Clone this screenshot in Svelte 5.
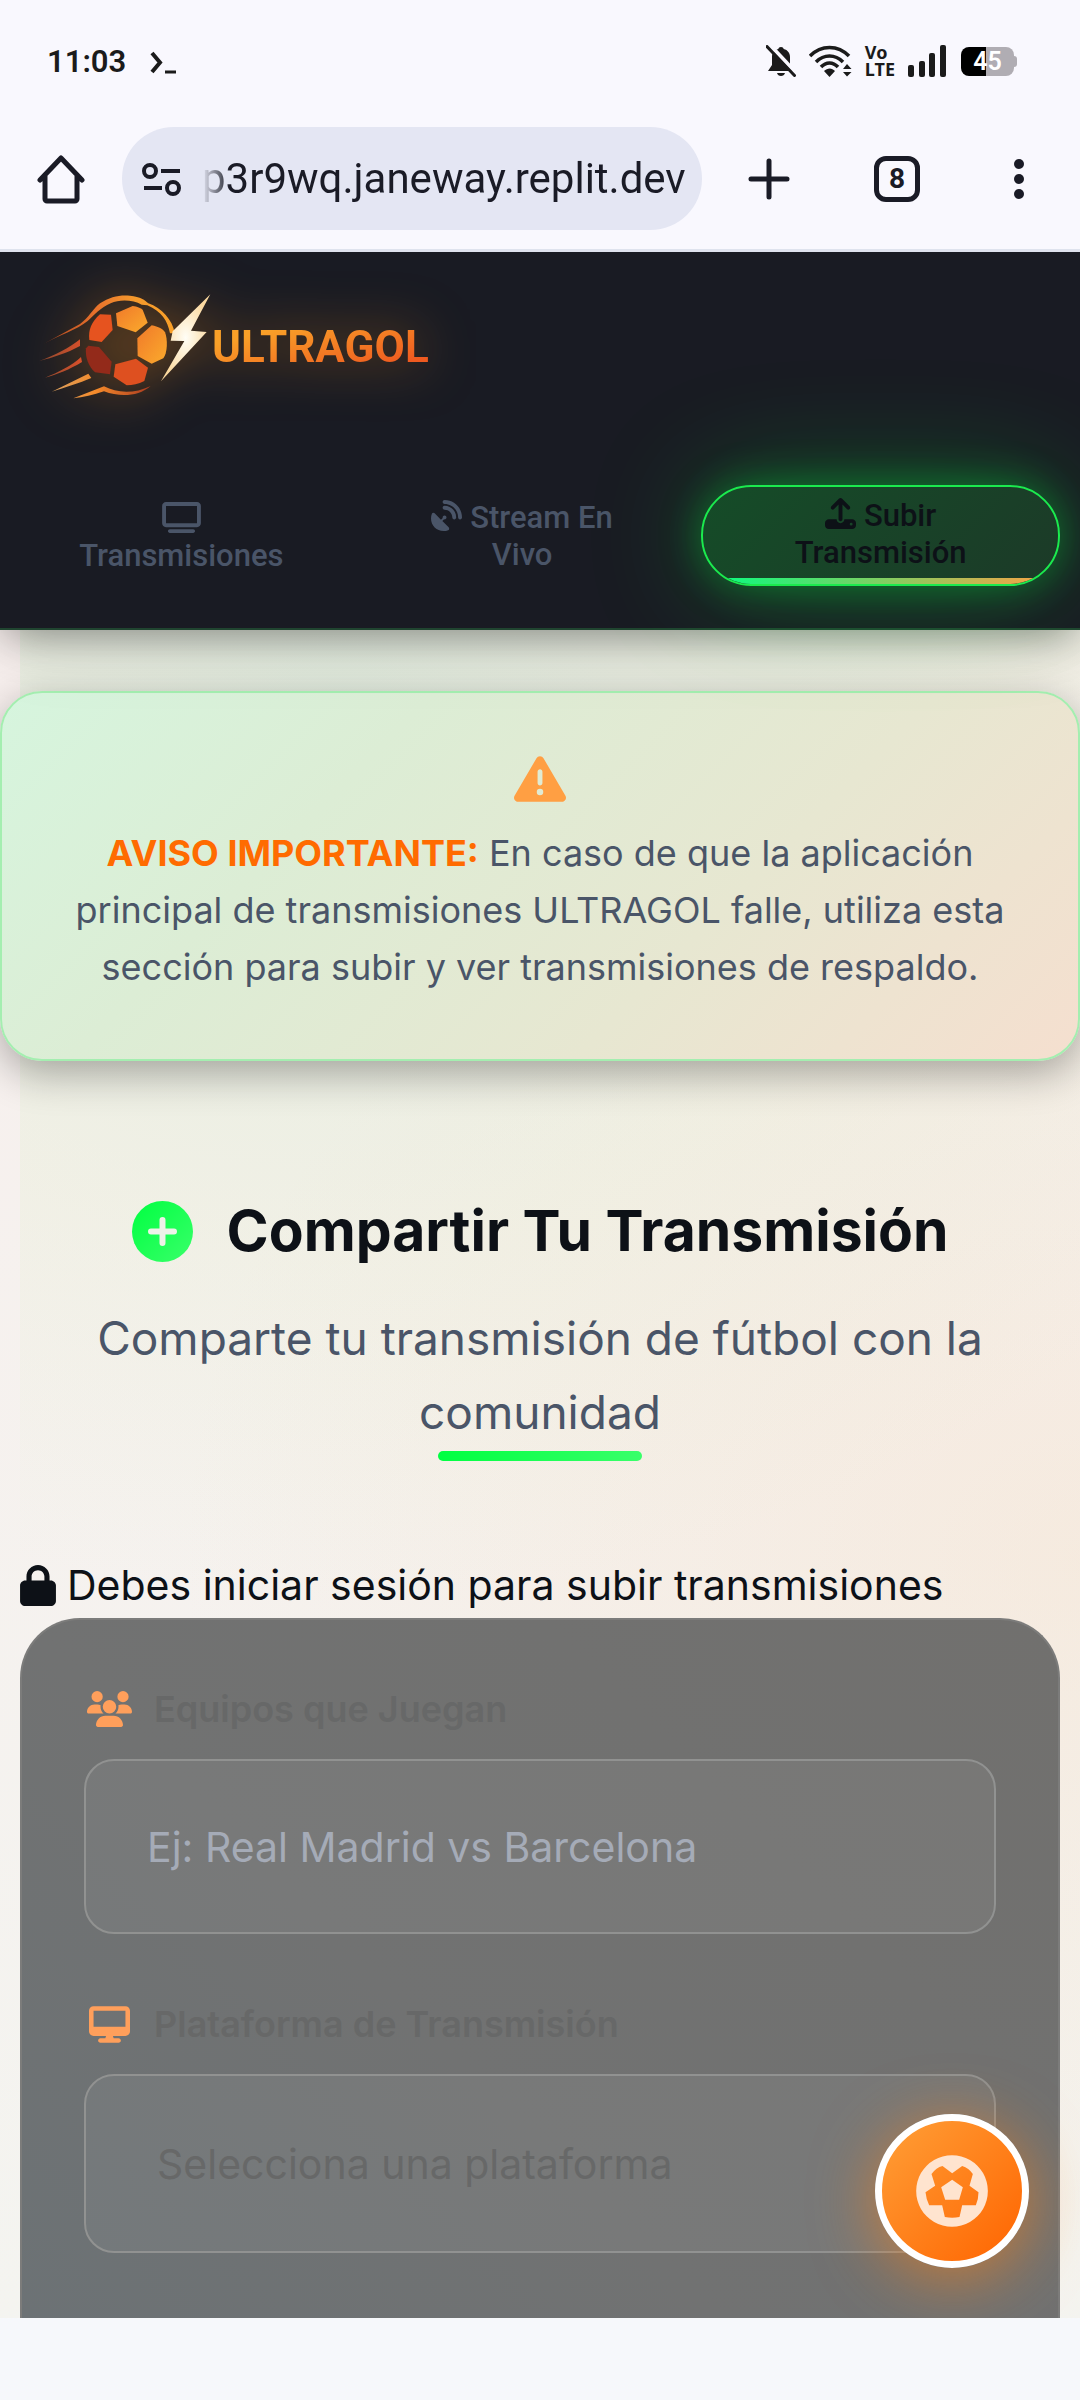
<script>
  const icons = {
    tv: {
      box: '0 0 640 512',
      d: 'M64 64V352H576V64H64zM0 64C0 28.7 28.7 0 64 0H576c35.3 0 64 28.7 64 64V352c0 35.3-28.7 64-64 64H64c-35.3 0-64-28.7-64-64V64zM128 448H512c17.7 0 32 14.3 32 32s-14.3 32-32 32H128c-17.7 0-32-14.3-32-32s14.3-32 32-32z'
    },
    dish: {
      box: '0 0 512 512',
      d: 'M192 32c0-17.7 14.3-32 32-32C383.1 0 512 128.9 512 288c0 17.7-14.3 32-32 32s-32-14.3-32-32C448 164.3 347.7 64 224 64c-17.7 0-32-14.3-32-32zM60.6 220.6L164.7 324.7l28.4-28.4c-.7-2.6-1.1-5.4-1.1-8.3c0-17.7 14.3-32 32-32s32 14.3 32 32s-14.3 32-32 32c-2.9 0-5.6-.4-8.3-1.1l-28.4 28.4L291.4 451.4c14.5 14.5 11.8 38.8-7.3 46.3C260.5 506.9 234.9 512 208 512C93.1 512 0 418.9 0 304c0-26.9 5.1-52.5 14.4-76.1c7.5-19 31.8-21.8 46.3-7.3zM224 96c106 0 192 86 192 192c0 17.7-14.3 32-32 32s-32-14.3-32-32c0-70.7-57.3-128-128-128c-17.7 0-32-14.3-32-32s14.3-32 32-32z'
    },
    upload: {
      box: '0 0 512 512',
      d: 'M288 109.3V352c0 17.7-14.3 32-32 32s-32-14.3-32-32V109.3l-73.4 73.4c-12.5 12.5-32.8 12.5-45.3 0s-12.5-32.8 0-45.3l128-128c12.5-12.5 32.8-12.5 45.3 0l128 128c12.5 12.5 12.5 32.8 0 45.3s-32.8 12.5-45.3 0L288 109.3zM64 352H192c0 35.3 28.7 64 64 64s64-28.7 64-64H448c35.3 0 64 28.7 64 64v32c0 35.3-28.7 64-64 64H64c-35.3 0-64-28.7-64-64V416c0-35.3 28.7-64 64-64zM432 456a24 24 0 1 0 0-48 24 24 0 1 0 0 48z'
    },
    warning: {
      box: '0 0 512 512',
      d: 'M256 32c14.2 0 27.3 7.5 34.5 19.8l216 368c7.3 12.4 7.3 27.7 .2 40.1S486.3 480 472 480H40c-14.3 0-27.6-7.7-34.7-20.1s-7-27.8 .2-40.1l216-368C228.7 39.5 241.8 32 256 32zm0 128c-13.3 0-24 10.7-24 24V296c0 13.3 10.7 24 24 24s24-10.7 24-24V184c0-13.3-10.7-24-24-24zm32 224a32 32 0 1 0 -64 0 32 32 0 1 0 64 0z'
    },
    lock: {
      box: '0 0 448 512',
      d: 'M144 144v48H304V144c0-44.2-35.8-80-80-80s-80 35.8-80 80zM80 192V144C80 64.5 144.5 0 224 0s144 64.5 144 144v48h16c35.3 0 64 28.7 64 64V448c0 35.3-28.7 64-64 64H64c-35.3 0-64-28.7-64-64V256c0-35.3 28.7-64 64-64H80z'
    },
    users: {
      box: '0 0 640 512',
      d: 'M144 0a80 80 0 1 1 0 160A80 80 0 1 1 144 0zM512 0a80 80 0 1 1 0 160A80 80 0 1 1 512 0zM0 298.7C0 239.8 47.8 192 106.7 192h42.7c15.9 0 31 3.5 44.6 9.7c-1.3 7.2-1.9 14.7-1.9 22.3c0 38.2 16.8 72.5 43.3 96H21.3C9.6 320 0 310.4 0 298.7zM405.3 320h-.7c26.6-23.5 43.3-57.8 43.3-96c0-7.6-.7-15-1.9-22.3c13.6-6.3 28.7-9.7 44.6-9.7h42.7C592.2 192 640 239.8 640 298.7c0 11.8-9.6 21.3-21.3 21.3H405.3zM224 224a96 96 0 1 1 192 0 96 96 0 1 1 -192 0zM128 485.3C128 411.7 187.7 352 261.3 352H378.7C452.3 352 512 411.7 512 485.3c0 14.7-11.9 26.7-26.7 26.7H154.7c-14.7 0-26.7-11.9-26.7-26.7z'
    },
    desktop: {
      box: '0 0 576 512',
      d: 'M64 0C28.7 0 0 28.7 0 64V352c0 35.3 28.7 64 64 64H240l-10.7 32H160c-17.7 0-32 14.3-32 32s14.3 32 32 32H416c17.7 0 32-14.3 32-32s-14.3-32-32-32H346.7L336 416H512c35.3 0 64-28.7 64-64V64c0-35.3-28.7-64-64-64H64zM512 64V288H64V64H512z'
    }
  };
</script>

{#snippet icon(name, cls)}
  <svg class={cls} viewBox={icons[name].box} fill="currentColor" aria-hidden="true"><path d={icons[name].d} /></svg>
{/snippet}

<div class="screen">
  <div class="status">
    <span class="time">11:03</span>
    <svg class="prompt" viewBox="0 0 28 24" fill="none" stroke="#1b1b1b"><path d="M2 2l8 9.500L2 21" stroke-width="4" /><path d="M15 21h11" stroke-width="3" /></svg>
    <div class="status-icons">
      <svg width="30" height="32" viewBox="0 0 30 32">
        <path fill="#1b1b1b" d="M15 2c1.500 0 2.500.8 2.700 2 4 1 6.300 4 6.300 8v8l4 6H2l4-6v-8c0-4 2.300-7 6.300-8 .2-1.200 1.200-2 2.700-2zM11 28h8c-.5 2-2 3-4 3s-3.500-1-4-3z" />
        <path d="M3 -1L31 29" stroke="#f9f8fe" stroke-width="4" /><path d="M1 1.500L28.500 30.500" stroke="#1b1b1b" stroke-width="3" stroke-linecap="round" />
      </svg>
      <svg width="43" height="32" viewBox="0 0 43 32" fill="none" stroke="#1b1b1b" stroke-width="3.500">
        <path d="M1 11C12-.5 29-.5 40 11M7 17c8-8 19-8 27 0M12 22c5-5.500 12-5.500 17 0" />
        <path fill="#1b1b1b" stroke="none" d="M15 26c3.500-3.500 8-3.500 11 0l-5.500 6zM34 24l4-5 4.500 5zM34 27h8.500L38 31.500z" />
      </svg>
      <span class="volte"><span>Vo</span><span>LTE</span></span>
      <svg width="40" height="32" viewBox="0 0 40 32" fill="#1b1b1b"><rect x="0" y="20" width="6" height="12" rx="2" /><rect x="11" y="16" width="6" height="16" rx="2" /><rect x="21" y="8" width="6" height="24" rx="2" /><rect x="32" y="0" width="6" height="32" rx="2" /></svg>
      <span class="battery">45</span>
    </div>
  </div>

  <div class="toolbar">
    <button class="tool" aria-label="Inicio">
      <svg width="48" height="50" viewBox="0 0 48 50" fill="none" stroke="#1a1b26" stroke-width="5" stroke-linecap="round" stroke-linejoin="round"><path d="M3 26L24 4l21 22M8 21v24c0 1 1 2 2 2h28c1 0 2-1 2-2V21" /></svg>
    </button>
    <div class="url">
      <svg width="40" height="34" viewBox="0 0 40 34" fill="none" stroke="#1a1b26" stroke-width="4"><circle cx="8" cy="9" r="6" /><circle cx="31" cy="26" r="6" /><path d="M19 9h19M2 26h18" /></svg>
      <span class="address">p3r9wq.janeway.replit.dev</span>
    </div>
    <button class="tool" aria-label="Nueva pestaña">
      <svg width="42" height="42" viewBox="0 0 42 42" stroke="#1a1b26" stroke-width="5" stroke-linecap="round"><path d="M21 3v36M3 21h36" /></svg>
    </button>
    <button class="tool" aria-label="Pestañas"><span class="tabs">8</span></button>
    <button class="tool" aria-label="Menú">
      <svg width="12" height="42" viewBox="0 0 12 42" fill="#1a1b26"><circle cx="6" cy="6" r="5" /><circle cx="6" cy="21" r="5" /><circle cx="6" cy="36" r="5" /></svg>
    </button>
  </div>

  <header class="site-header">
    <a class="logo" href="#inicio">
      <svg width="190" height="130" viewBox="0 0 570 390" aria-hidden="true">
        <defs>
          <linearGradient id="arc" x1="0" x2="1"><stop offset="0" stop-color="#a8431f" /><stop offset=".4" stop-color="#e8722c" /><stop offset=".7" stop-color="#f59a2c" /><stop offset="1" stop-color="#f9a028" /></linearGradient>
          <linearGradient id="streak" x1="0" x2="1"><stop offset="0" stop-color="#8a4a30" /><stop offset="1" stop-color="#d9502a" /></linearGradient>
          <linearGradient id="tail" x1="0" x2="1"><stop offset="0" stop-color="#d9a060" /><stop offset=".45" stop-color="#f58a2a" /><stop offset="1" stop-color="#a83a20" /></linearGradient>
          <linearGradient id="gold" x1="0" x2="1" y2="1"><stop offset="0" stop-color="#f0792a" /><stop offset="1" stop-color="#fbab2c" /></linearGradient>
          <radialGradient id="bolt"><stop offset="0" stop-color="#fffef6" /><stop offset="1" stop-color="#fbd9a0" /></radialGradient>
        </defs>
        <path fill="url(#arc)" d="M40 192L150 132C175 115 190 85 210 70C240 50 270 44 300 47C332 50 345 60 355 70C395 84 428 120 434 160L420 160C412 120 395 95 352 76L335 74C310 60 270 57 242 70C212 82 192 107 172 124C140 150 90 165 40 192Z" />
        <path fill="url(#streak)" d="M28 243C75 226 120 203 150 178V198C110 220 70 232 28 243ZM45 293C85 277 125 257 153 231L156 246C120 268 80 284 45 293Z" />
        <path fill="url(#tail)" d="M65 335L175 281L184 294C150 308 100 325 65 335ZM130 355L222 319C262 340 312 342 362 318C325 350 270 352 222 334C190 345 160 352 130 355Z" />
        <path fill="#e6531f" d="M210 103L243 104L248 150L215 186L178 180C174 150 185 125 210 103Z" />
        <path fill="url(#gold)" d="M258 100L308 78C322 80 332 84 338 89L353 128L317 157L262 138Z" />
        <path fill="url(#gold)" d="M365 136C385 140 400 148 405 157C414 180 412 220 400 235L365 251L323 228L322 175Z" />
        <path fill="#de5020" d="M318 236L354 263L343 303C325 312 308 316 290 316L251 290L256 253Z" />
        <path fill="#932a1a" d="M175 197L207 201L245 245L240 283L195 277C175 260 165 230 168 205Z" />
        <path fill="url(#bolt)" d="M541 43L428 154L422 182L463 183L393 304L530 156L483 152Z" />
      </svg>
      <span class="wordmark">ULTRAGOL</span>
    </a>
    <nav>
      <a class="nav-item stacked" href="#transmisiones">{@render icon('tv', 'wide')}<span>Transmisiones</span></a>
      <a class="nav-item" href="#stream">{@render icon('dish', 'square')} Stream En<br />Vivo</a>
      <a class="nav-item active" href="#subir">{@render icon('upload', 'square')} Subir<br />Transmisión</a>
    </nav>
  </header>

  <main>
    <section class="notice">
      {@render icon('warning', 'warn')}
      <p><strong>AVISO IMPORTANTE:</strong> En caso de que la aplicación principal de transmisiones ULTRAGOL falle, utiliza esta sección para subir y ver transmisiones de respaldo.</p>
    </section>

    <section class="intro">
      <h1>
        <svg width="61" height="61" viewBox="0 0 61 61" aria-hidden="true">
          <defs><linearGradient id="green" x1="0" y1="0" x2="1" y2="1"><stop offset="0" stop-color="#00ff41" /><stop offset="1" stop-color="#39ff6a" /></linearGradient></defs>
          <circle cx="30.500" cy="30.500" r="30.500" fill="url(#green)" /><path d="M30.500 19v23M19 30.500h23" stroke="#eef2e8" stroke-width="6" stroke-linecap="round" />
        </svg>
        <span>Compartir Tu Transmisión</span>
      </h1>
      <p>Comparte tu transmisión de fútbol con la comunidad</p>
      <div class="rule"></div>
    </section>

    <section class="share">
      <p class="login">{@render icon('lock', 'lock')}<span>Debes iniciar sesión para subir transmisiones</span></p>
      <form>
        <div class="field">
          <label for="teams"><span class="slot">{@render icon('users', 'users')}</span>Equipos que Juegan</label>
          <input id="teams" type="text" placeholder="Ej: Real Madrid vs Barcelona" />
        </div>
        <div class="field">
          <label for="platform"><span class="slot">{@render icon('desktop', 'desktop')}</span>Plataforma de Transmisión</label>
          <select id="platform"><option>Selecciona una plataforma</option></select>
        </div>
      </form>
    </section>

    <button class="fab" aria-label="ULTRAGOL">
      <svg width="72" height="72" viewBox="230 222 215 216" fill="#ffe4cf"><path fill-rule="evenodd" d="M337.500 222.500a107.500 107.500 0 1 0 .1 0zM276 279Q290 260 309 255L338 277L368 255Q388 261 400 279L390 314L417 334Q417 355 409 373L368 373L360 408Q338 413 316 408L308 373L269 373Q260 355 258 334L287 314ZM338 296L370 319L359 356L317 356L305 319Z" /></svg>
    </button>
  </main>
  <div class="gesture-bar"></div>
</div>

<style>
  :global(body) { margin: 0; background: #f6f8fb; }
  * { box-sizing: border-box; }
  p, h1 { margin: 0; }
  button { border: 0; padding: 0; background: none; font: inherit; }
  a { text-decoration: none; }
  .screen { min-height: 100vh; display: flex; flex-direction: column; font-family: Inter, sans-serif; color: #0d1117; overflow: hidden; }

  .status { position: relative; z-index: 2; display: flex; align-items: center; height: 122px; padding: 0 66px 0 47px; background: #f9f8fe; font-family: Roboto, sans-serif; }
  .time { font-size: 31px; font-weight: 600; color: #1b1b1b; }
  .prompt { width: 28px; height: 24px; margin-left: 24px; margin-top: 4px; }
  .status-icons { margin-left: auto; display: flex; align-items: center; gap: 13px; }
  .volte { display: flex; flex-direction: column; font: 700 18px/17px "Noto Sans", sans-serif; color: #1b1b1b; }
  .battery { width: 53px; height: 29px; border-radius: 8px; background: linear-gradient(90deg, #000 47%, #b0adb3 47%); color: #fff; font-size: 25px; font-weight: 600; line-height: 29px; text-align: center; position: relative; }
  .battery::after { content: ''; position: absolute; right: -3px; top: 9px; width: 3px; height: 11px; border-radius: 0 3px 3px 0; background: #b0adb3; }

  .toolbar { position: relative; z-index: 2; display: flex; align-items: center; height: 130px; padding: 5px 55px 19px 37px; background: #f9f8fe; border-bottom: 3px solid #dfe3ee; }
  .tool { display: flex; color: #1a1b26; }
  .tool:nth-of-type(1) { margin-right: 37px; }
  .url { flex: 1; display: flex; align-items: center; gap: 20px; height: 103px; padding: 0 20px; border-radius: 52px; background: #e4e6f3; overflow: hidden; }
  .url svg { flex: none; }
  .address { font: 400 42px/52px Roboto, sans-serif; color: #1a1b26; white-space: nowrap; -webkit-mask-image: linear-gradient(90deg, transparent, #000 28px); mask-image: linear-gradient(90deg, transparent, #000 28px); }
  .url ~ .tool { margin-left: 46px; }
  .url ~ .tool ~ .tool { margin-left: 84px; }
  .url ~ .tool ~ .tool ~ .tool { margin-left: 93px; }
  .tabs { width: 46px; height: 46px; border: 5px solid #1a1b26; border-radius: 12px; font: 700 28px/36px Roboto, sans-serif; text-align: center; }

  .site-header { position: relative; z-index: 1; padding: 28px 20px 42px; background: #191b23; border-bottom: 2px solid #204530; box-shadow: 0 10px 42px -6px rgba(0, 0, 0, .42), 0 10px 80px rgba(0, 0, 0, .08); }
  .logo { display: flex; width: max-content; align-items: center; padding-left: 10px; filter: drop-shadow(0 0 26px rgba(255, 145, 20, .5)); }
  .wordmark { margin-left: -8px; padding-top: 4px; font: 700 44px/52px Roboto, sans-serif; background: linear-gradient(165deg, #f9a028 25%, #ee5a20 85%); -webkit-background-clip: text; background-clip: text; color: transparent; }
  nav { display: grid; grid-template-columns: 9fr 10fr 10fr; margin-top: 75px; }
  .nav-item { position: relative; padding: 14px 12px 12px; border-radius: 50px; font: 500 31px/37px Roboto, sans-serif; color: #4a5568; text-align: center; }
  .nav-item svg { vertical-align: -3px; }
  .stacked { display: flex; flex-direction: column; align-items: center; gap: 4px; padding-top: 17px; }
  .wide { width: 39px; height: 31px; }
  .square { width: 31px; height: 31px; }
  .active { overflow: hidden; padding: 10px 12px 12px; border: 2px solid #1bea4e; color: #0d1117; background: linear-gradient(135deg, #154c28, #1c3a28); box-shadow: 0 0 42px rgba(0, 255, 65, .34), 0 0 120px rgba(0, 255, 65, .28); }
  .active::after { content: ''; position: absolute; left: 0; right: 0; bottom: 0; height: 6px; background: linear-gradient(90deg, #00ff82, #ff9f43); }

  main { position: relative; flex: 1; padding-top: 61px; background: radial-gradient(ellipse 900px 800px at 100% 55%, rgba(245, 205, 160, .2), transparent), linear-gradient(180deg, #f7efed, #f4f4f0); }
  main::before { content: ''; position: absolute; inset: 0 0 0 20px; background: radial-gradient(ellipse 1100px 900px at 30% 4%, rgba(200, 235, 205, .4), rgba(225, 238, 205, .26) 60%, transparent); }
  .notice { position: relative; padding: 60px 62px 63px; border: 2px solid #a4eeb0; border-radius: 42px; background: linear-gradient(135deg, #d6f5de, #dcedd5 30%, #e7e7d1 65%, #f5dfcf); box-shadow: 0 12px 42px rgba(0, 0, 0, .32); text-align: center; }
  .warn { display: block; width: 52px; height: 52px; margin: 0 auto 20px; color: #ff9f43; }
  .notice p { font-size: 36px; line-height: 57px; color: #4a5568; }
  .notice strong { color: #ff6b00; font-weight: 700; }

  .intro { position: relative; padding: 134px 62px 0; text-align: center; }
  h1 { display: flex; justify-content: center; align-items: center; gap: 34px; font-size: 57px; line-height: 72px; font-weight: 700; }
  .intro p { margin-top: 34px; font-size: 46px; line-height: 74px; color: #4a5568; }
  .rule { width: 204px; height: 10px; margin: 2px auto 0; border-radius: 5px; background: linear-gradient(90deg, #00ff41, #39ff6a); }

  .share { position: relative; padding: 91px 20px 0; }
  .login { display: flex; align-items: center; gap: 11px; font-size: 41px; line-height: 66px; }
  .lock { width: 36px; height: 41px; }
  form { display: flex; flex-direction: column; gap: 61px; padding: 60px 62px 65px; border: 2px solid #7c7c7b; border-bottom: 0; border-radius: 60px 60px 0 0; background: linear-gradient(45deg, #6c7275, #717272 40%, #71706e); }
  .field { display: flex; flex-direction: column; gap: 21px; }
  label { display: flex; align-items: center; gap: 20px; font-size: 36px; line-height: 58px; font-weight: 600; color: #676868; }
  .slot { display: flex; justify-content: center; width: 50px; color: #ff9f5b; }
  .users { width: 45px; height: 36px; }
  .desktop { width: 41px; height: 37px; }
  input, select { width: 100%; margin: 0; border: 2px solid #919291; border-radius: 30px; background: rgba(255, 255, 255, .05); font: 400 41px/50px Inter, sans-serif; appearance: none; outline: 0; }
  input { height: 175px; padding: 0 61px; }
  input::placeholder { color: #a5abb7; opacity: 1; }
  select { height: 179px; padding: 0 71px; color: #676868; }

  .fab { position: absolute; right: 51px; bottom: 50px; width: 154px; height: 154px; display: flex; align-items: center; justify-content: center; border: 7px solid #fff; border-radius: 50%; background: linear-gradient(135deg, #ff9f37, #ff6400); box-shadow: 0 10px 62px rgba(255, 130, 20, .6); }
  .gesture-bar { position: relative; height: 83px; background: #f6f8fb; }
</style>
